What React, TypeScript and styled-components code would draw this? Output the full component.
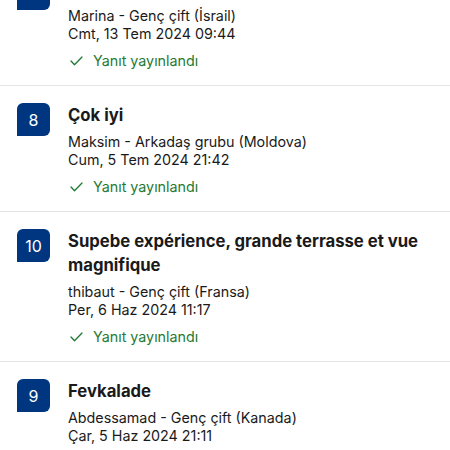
import React from "react";
import styled, { createGlobalStyle } from "styled-components";

const Global = createGlobalStyle`
  html, body { margin: 0; padding: 0; background: #ffffff; overflow: hidden; }
  body { font-family: Inter, "Noto Sans", "Liberation Sans", sans-serif; -webkit-font-smoothing: antialiased; }
`;

const List = styled.div`
  display: flex;
  flex-direction: column;
  margin-top: -40px;
`;

const Row = styled.div`
  display: flex;
  gap: 18px;
  padding: 16px 17px 15px 17px;
  border-bottom: 1px solid #e4e4e4;
`;

const Badge = styled.div`
  flex: 0 0 auto;
  width: 33px;
  height: 33px;
  margin-top: 1px;
  background: #003580;
  color: #ffffff;
  border-radius: 6px 6px 6px 0;
  display: flex;
  align-items: center;
  justify-content: center;
  font-size: 16px;
  font-weight: 400;
`;

const Body = styled.div`
  display: flex;
  flex-direction: column;
  min-width: 0;
  padding-top: 1px;
`;

const Title = styled.div`
  font-size: 16.7px;
  font-weight: 700;
  line-height: 24px;
  color: #1a1a1a;
  margin-bottom: 6px;
`;

const Meta = styled.div`
  font-size: 14.3px;
  line-height: 18px;
  color: #1a1a1a;
`;

const Status = styled.div`
  display: flex;
  align-items: center;
  gap: 10px;
  margin-top: 9px;
  font-size: 14.3px;
  line-height: 18px;
  color: #1f7a33;
  padding-left: 2px;
`;

const Check = () => (
  <svg width="13" height="10" viewBox="0 0 13 10" fill="none">
    <polyline points="1,5 4.5,8.8 12,1" stroke="#1f7a33" strokeWidth="1.3" strokeLinecap="round" strokeLinejoin="round" />
  </svg>
);

type Review = {
  score: number;
  title: string;
  author: string;
  date: string;
  replied: boolean;
};

const reviews: Review[] = [
  { score: 10, title: "Olağanüstü", author: "Marina - Genç çift (İsrail)", date: "Cmt, 13 Tem 2024 09:44", replied: true },
  { score: 8, title: "Çok iyi", author: "Maksim - Arkadaş grubu (Moldova)", date: "Cum, 5 Tem 2024 21:42", replied: true },
  { score: 10, title: "Supebe expérience, grande terrasse et vue magnifique", author: "thibaut - Genç çift (Fransa)", date: "Per, 6 Haz 2024 11:17", replied: true },
  { score: 9, title: "Fevkalade", author: "Abdessamad - Genç çift (Kanada)", date: "Çar, 5 Haz 2024 21:11", replied: true },
];

export default function App() {
  return (
    <>
      <Global />
      <List>
        {reviews.map((r, i) => (
          <Row key={i}>
            <Badge>{r.score}</Badge>
            <Body>
              <Title>{r.title}</Title>
              <Meta>{r.author}</Meta>
              <Meta>{r.date}</Meta>
              {r.replied && (
                <Status>
                  <Check />
                  Yanıt yayınlandı
                </Status>
              )}
            </Body>
          </Row>
        ))}
      </List>
    </>
  );
}
